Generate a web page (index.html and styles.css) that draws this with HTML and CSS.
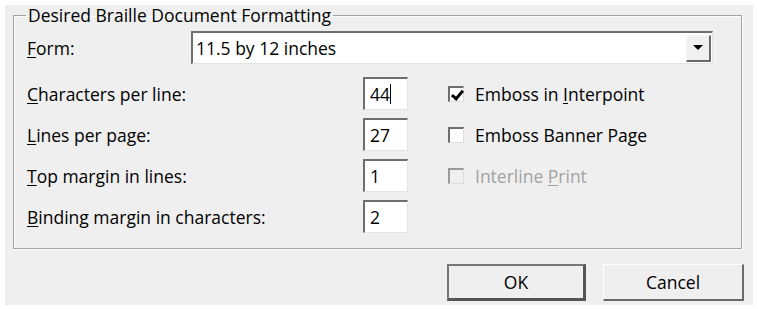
FILE: index.html
```html
<!DOCTYPE html>
<html lang="en">
<head>
    <title>Braille Document Formatting</title>
    <link rel="stylesheet" href="styles.css">
</head>
<body>
    <div class="dialog">
        <!-- Group box -->
        <fieldset class="group">
            <legend>Desired Braille Document Formatting</legend>

            <div class="form-row">
                <label class="field-label"><u>F</u>orm:</label>
                <div class="combo">
                    <span class="combo-value">11.5 by 12 inches</span>
                    <span class="combo-button"><span class="arrow"></span></span>
                </div>
            </div>

            <div class="fields">
                <label class="field-label"><u>C</u>haracters per line:</label>
                <div class="spin"><span>44</span><span class="caret"></span></div>
                <label class="check"><span class="box checked"></span><span>Emboss in <u>I</u>nterpoint</span></label>

                <label class="field-label"><u>L</u>ines per page:</label>
                <div class="spin"><span>27</span></div>
                <label class="check"><span class="box"></span><span>Emboss Banner Page</span></label>

                <label class="field-label"><u>T</u>op margin in lines:</label>
                <div class="spin"><span>1</span></div>
                <label class="check disabled"><span class="box"></span><span>Interline <u>P</u>rint</span></label>

                <label class="field-label"><u>B</u>inding margin in characters:</label>
                <div class="spin"><span>2</span></div>
                <span></span>
            </div>
        </fieldset>

        <!-- Buttons -->
        <div class="buttons">
            <button class="btn default">OK</button>
            <button class="btn">Cancel</button>
        </div>
    </div>
</body>
</html>
```

FILE: styles.css
```css
/* Global Styles */
* {
    margin: 0;
    padding: 0;
    box-sizing: border-box;
}

body {
    background-color: #fff;
    font-family: "Open Sans", Lato, sans-serif;
    font-size: 17.5px;
    font-weight: 500;
    color: #000;
}

.dialog {
    margin: 5px;
    width: 748px;
    height: 300px;
    background-color: #efefef;
    padding: 0 0 0 8px;
}

/* Group box */
.group {
    width: 729px;
    height: 244px;
    border: 1px solid #a3a3a3;
    box-shadow: 1px 1px 0 #fff, inset 1px 1px 0 #fff;
    padding: 0 0 0 13px;
}

.group legend {
    margin-left: -1px;
    padding: 0 2px;
    line-height: 20px;
}

u {
    text-decoration: underline;
    text-underline-offset: 2px;
}

.form-row {
    display: flex;
    align-items: center;
    margin-top: 6px;
    height: 33px;
}

.form-row .field-label {
    width: 164px;
}

/* Combo box */
.combo {
    width: 522px;
    height: 33px;
    background-color: #fff;
    border-top: 2px solid #6e6e6e;
    border-left: 2px solid #6e6e6e;
    border-right: 1px solid #e4e4e4;
    border-bottom: 1px solid #e4e4e4;
    display: flex;
    align-items: center;
    justify-content: space-between;
    padding: 0 1px 0 3px;
}

.combo-button {
    width: 25px;
    height: 27px;
    background-color: #f0f0f0;
    border-top: 1px solid #f8f8f8;
    border-left: 1px solid #f8f8f8;
    border-right: 2px solid #6a6a6a;
    border-bottom: 2px solid #6a6a6a;
    display: flex;
    align-items: center;
    justify-content: center;
}

.arrow {
    width: 0;
    height: 0;
    border-left: 5px solid transparent;
    border-right: 5px solid transparent;
    border-top: 5px solid #000;
}

/* Field grid */
.fields {
    display: grid;
    grid-template-columns: 336px 45px 1fr;
    grid-auto-rows: 33px;
    row-gap: 8px;
    align-items: center;
    margin-top: 13px;
}

.spin {
    height: 33px;
    background-color: #fff;
    border-top: 2px solid #6e6e6e;
    border-left: 2px solid #6e6e6e;
    border-right: 1px solid #e4e4e4;
    border-bottom: 1px solid #e4e4e4;
    display: flex;
    align-items: center;
    padding-left: 5px;
}

.caret {
    width: 1px;
    height: 20px;
    background-color: #000;
}

.check {
    display: flex;
    align-items: center;
    margin-left: 40px;
    gap: 11px;
}

.check .box {
    width: 16px;
    height: 16px;
    background-color: #fff;
    border-top: 2px solid #6e6e6e;
    border-left: 2px solid #6e6e6e;
    border-right: 1px solid #dcdcdc;
    border-bottom: 1px solid #dcdcdc;
    position: relative;
}

.check .box.checked::after {
    content: "";
    position: absolute;
    left: 4px;
    top: 0;
    width: 4px;
    height: 9px;
    border-right: 3px solid #000;
    border-bottom: 3px solid #000;
    transform: rotate(40deg);
}

.check.disabled {
    color: #a2a2a2;
}

.check.disabled .box {
    background-color: #efefef;
    border-top-color: #9a9a9a;
    border-left-color: #9a9a9a;
}

/* Buttons */
.buttons {
    display: flex;
    justify-content: flex-end;
    gap: 17px;
    margin-top: 15px;
    width: 731px;
}

.btn {
    font-family: inherit;
    font-size: 17.5px;
    font-weight: 500;
    color: #000;
    height: 37px;
    width: 141px;
    background-color: #efefef;
    border-top: 1px solid #fff;
    border-left: 1px solid #fff;
    border-right: 2px solid #6a6a6a;
    border-bottom: 2px solid #6a6a6a;
}

.btn.default {
    width: 139px;
    border-top: 2px solid #777;
    border-left: 2px solid #777;
    border-right: 3px solid #555;
    border-bottom: 3px solid #555;
}
```
